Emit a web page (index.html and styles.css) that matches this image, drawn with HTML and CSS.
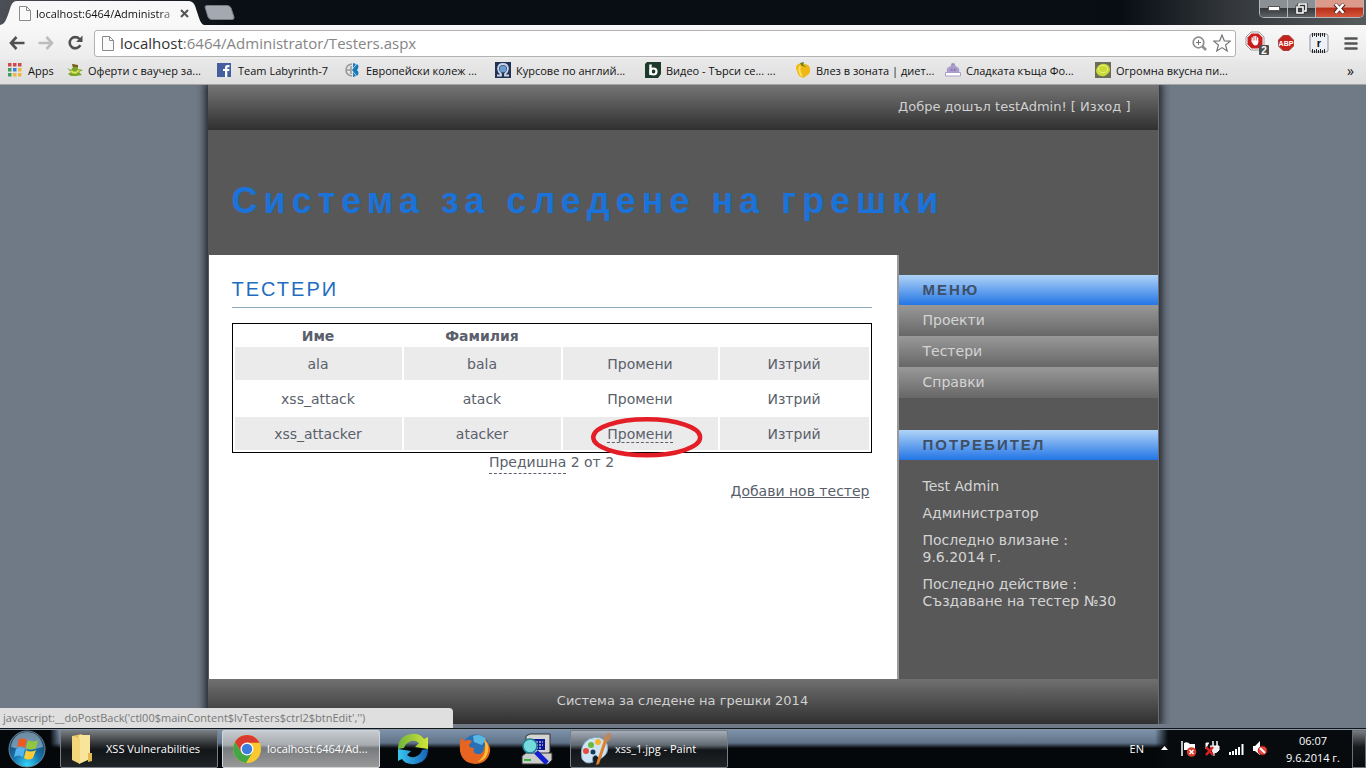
FILE: index.html
```html
<!DOCTYPE html>
<html lang="bg">
<head>
<meta charset="utf-8">
<title>Система за следене на грешки</title>
<link rel="stylesheet" href="styles.css">
</head>
<body>
<header class="browser">
  <div class="tabstrip">
    <div class="tab">
      <svg class="tab-shape" viewBox="0 0 206 25" preserveAspectRatio="none"><path d="M0 25C5 24 6 20 8 15L11 6Q13 1 17 1H190Q195 1 197 6L201 18Q203 24 206 25Z" fill="#f8f8f8"/></svg>
      <svg class="tab-page" width="12" height="15" viewBox="0 0 12 15"><path d="M.5.5H7.500L11.500 4.500V14.500H.5ZM7.500.5V4.500H11.500" fill="#fafafa" stroke="#8b8b8b"/></svg>
      <span class="tab-title">localhost:6464/Administra</span>
      <button class="tab-close" aria-label="Close tab"><svg width="9" height="9" viewBox="0 0 9 9"><path d="M1 1L8 8M8 1L1 8" stroke="#555" stroke-width="2"/></svg></button>
    </div>
    <button class="newtab" aria-label="New tab"><svg width="31" height="15" viewBox="0 0 31 15"><path d="M1 2Q1 .5 3 .5H23Q26 .5 27 3L30 12Q30.500 14.500 28 14.500H8Q5 14.500 4 12Z" fill="#a4a9b1" stroke="#777c84"/></svg></button>
    <div class="winbtns">
      <button aria-label="Minimize"><svg width="12" height="5" viewBox="0 0 12 5"><rect x=".5" y=".5" width="11" height="4" fill="#fff" stroke="#555"/></svg></button>
      <button aria-label="Restore"><svg width="13" height="12" viewBox="0 0 13 12"><path d="M4 3V1H11V8H9M2 4H8V10H2Z" fill="none" stroke="#333" stroke-width="3"/><path d="M4 3V1H11V8H9M2 4H8V10H2Z" fill="none" stroke="#fff" stroke-width="1.600"/></svg></button>
      <button class="winclose" aria-label="Close"><svg width="13" height="11" viewBox="0 0 13 11"><path d="M2 1L11 10M11 1L2 10" stroke="#4a2020" stroke-width="4"/><path d="M2.500 1L10.500 10M10.500 1L2.500 10" stroke="#fff" stroke-width="2.600"/></svg></button>
    </div>
  </div>
  <div class="toolbar">
    <button aria-label="Back"><svg width="16" height="14" viewBox="0 0 16 14"><path d="M7.500 1L2 7L7.500 13M2 7H15.500" fill="none" stroke="#505050" stroke-width="2.600"/></svg></button>
    <button aria-label="Forward"><svg width="16" height="14" viewBox="0 0 16 14"><path d="M8.500 1L14 7L8.500 13M14 7H.5" fill="none" stroke="#bdbdbd" stroke-width="2.600"/></svg></button>
    <button aria-label="Reload"><svg width="17" height="16" viewBox="0 0 17 16"><path d="M12.500 4A5.600 5.600 0 1 0 13.300 10.200" fill="none" stroke="#505050" stroke-width="2.600"/><path d="M15.500 .5V7H9Z" fill="#505050"/></svg></button>
    <div class="omnibox">
      <svg width="12" height="15" viewBox="0 0 12 15"><path d="M.5.5H7.500L11.500 4.500V14.500H.5ZM7.500.5V4.500H11.500" fill="#fafafa" stroke="#8b8b8b"/></svg>
      <div class="url" role="textbox" aria-label="Address" contenteditable="true"><b>localhost</b>:6464/Administrator/Testers.aspx</div>
      <svg width="15" height="15" viewBox="0 0 15 15"><circle cx="6.500" cy="6.500" r="5.300" fill="none" stroke="#8e8e8e" stroke-width="1.700"/><path d="M6.500 4V9M4 6.500H9" stroke="#777"/><path d="M10.500 10.500L14 14" stroke="#8e8e8e" stroke-width="2.500"/></svg>
      <svg width="18" height="18" viewBox="0 0 18 18"><path d="M9 1L11.300 6.800L17.300 7.100L12.600 11L14.200 17L9 13.600L3.800 17L5.400 11L.7 7.100L6.700 6.800Z" fill="#fdfdfd" stroke="#777" stroke-width="1.200"/></svg>
    </div>
    <div class="extensions">
      <button aria-label="AdBlock"><svg width="24" height="24" viewBox="0 0 24 24"><path d="M6 1H14L19 6V14L14 19H6L1 14V6Z" fill="#fff" stroke="#999"/><path d="M6.500 2.500H13.500L17.500 6.500V13.500L13.500 17.500H6.500L2.500 13.500V6.500Z" fill="#c91c1c"/><path d="M7.200 10V7M9 10V5.500M10.800 10V5.500M12.600 11V7" stroke="#fff" stroke-width="1.300" stroke-linecap="round"/><path d="M6.600 9.500H13.200V12Q12.500 14.500 10.500 14.500Q8.500 14.500 6.600 11Z" fill="#fff"/><rect x="14" y="14" width="10" height="10" rx="1" fill="#4f4f4f"/><text x="19" y="23" class="badge">2</text></svg></button>
      <button class="plus" aria-label="Adblock Plus"><svg width="16" height="16" viewBox="0 0 16 16"><path d="M5 .5H11L15.500 5V11L11 15.500H5L.5 11V5Z" fill="#c4221b" stroke="#a5423c"/><text x="8" y="11" class="abp">ABP</text></svg></button>
      <button aria-label="Ruler"><svg width="20" height="20" viewBox="0 0 20 20"><rect x="1" y="1" width="18" height="18" rx="2" fill="#edf1f5" stroke="#8d949c"/><path d="M3.500 0V4M5.500 0V3M7.500 0V4M9.500 0V3M11.500 0V4M13.500 0V3M15.500 0V4M3.500 16V20M5.500 17V20M7.500 16V20M9.500 17V20M11.500 16V20M13.500 17V20M15.500 16V20" stroke="#252525"/><text x="10" y="14" class="ruler">r</text></svg></button>
      <button aria-label="Menu"><svg width="14" height="13" viewBox="0 0 14 13"><path d="M1.500 1.500H12.500M1.500 6.500H12.500M1.500 11.500H12.500" stroke="#555" stroke-width="2.600" stroke-linecap="round"/></svg></button>
    </div>
  </div>
  <nav class="bookmarks">
    <a class="bm apps" href="#"><svg width="14" height="14" viewBox="0 0 14 14"><path d="M0 0h3.500v3.500H0zM5 0h3.500v3.500H5zM10 0h3.500v3.500H10z" fill="#d2484b"/><path d="M0 5h3.500v3.500H0z" fill="#3c9d5c"/><path d="M5 5h3.500v3.500H5z" fill="#3f7ed8"/><path d="M10 5h3.500v3.500H10zM5 10h3.500v3.500H5zM10 10h3.500v3.500H10z" fill="#edb83f"/><path d="M0 10h3.500v3.500H0z" fill="#3c9d5c"/></svg>Apps</a>
    <a class="bm" href="#"><svg width="16" height="14" viewBox="0 0 16 14"><path d="M0 5L4 7L6 4L5 2L7 1L9 3L11 3L11 6L16 7L12 9L15 12L9 13L4 13L1 11L4 9Z" fill="#79a629"/><path d="M5 1L11 2L11 4L6 4Z" fill="#7d5a1d"/><path d="M4 8Q8 12 12 7" fill="none" stroke="#e3e05a" stroke-width="2"/></svg>Оферти с ваучер за...</a>
    <a class="bm short" href="#"><svg width="14" height="14" viewBox="0 0 14 14"><rect width="14" height="14" fill="#455f9e"/><path d="M8 14V8H6V6H8V4.500Q8 2 10.500 2H12.500V4.200H11Q10.300 4.200 10.300 5V6H12.500L12.200 8H10.300V14Z" fill="#fff"/></svg>Team Labyrinth-7</a>
    <a class="bm" href="#"><svg width="16" height="16" viewBox="0 0 16 16"><path d="M7 2Q1 3 1 8Q1 13 7 14M1 8H6M6 4V12" fill="none" stroke="#999" stroke-width="1.500"/><path d="M8 1V6L11 2ZM8 15V10L11 14ZM7 8L12 2Q15 4 12 8Q15 11 12 14Z" fill="#1779b8"/></svg>Европейски колеж ...</a>
    <a class="bm" href="#"><svg width="16" height="16" viewBox="0 0 16 16"><rect width="16" height="16" fill="#223256"/><path d="M2 13.500H6V12Q3 9.500 3 6.500Q3.500 2 8 2Q12.500 2 13 6.500Q13 9.500 10 12V13.500H14" fill="none" stroke="#c9d6e8" stroke-width="1.800"/><circle cx="8" cy="7" r="3.500" fill="#6b9bd1"/></svg>Курсове по англий...</a>
    <a class="bm" href="#"><svg width="16" height="16" viewBox="0 0 16 16"><path d="M2 0H16V12L13 16H0V2Z" fill="#1d3a2b"/><path d="M5.500 2.500V13" stroke="#fff" stroke-width="2.500"/><circle cx="8.500" cy="9.500" r="3" fill="none" stroke="#fff" stroke-width="2.200"/></svg>Видео - Търси се... ...</a>
    <a class="bm" href="#"><svg width="16" height="16" viewBox="0 0 16 16"><path d="M2 3Q0 6 2 9Q3 14 6 15Q9 17 11 14Q16 12 15 7Q15 3 10 2Q5 0 2 3Z" fill="#efb816"/><path d="M5 4Q3 9 7 14" fill="none" stroke="#ffe05a" stroke-width="2"/><path d="M5 1L9 0L8 3L12 5L7 4Z" fill="#657b20"/></svg>Влез в зоната | диет...</a>
    <a class="bm" href="#"><svg width="16" height="14" viewBox="0 0 16 14"><circle cx="8" cy="2" r="2" fill="#9a8ebd"/><path d="M2 9Q1 5 4 4Q8 0 12 4Q15 5 14 9Z" fill="#a99bcb"/><path d="M.5 9.500H15.500V13H.5Z" fill="#fff" stroke="#aaa0c4"/><path d="M6 6H7.500V7.500H6ZM9 6H10.500V7.500H9Z" fill="#766795"/></svg>Сладката къща Фо...</a>
    <a class="bm" href="#"><svg width="16" height="16" viewBox="0 0 16 16"><rect width="16" height="16" fill="#6b6d59"/><ellipse cx="8" cy="8" rx="7" ry="6" fill="#c9d936" transform="rotate(-20 8 8)"/><ellipse cx="8" cy="7" rx="4.500" ry="3.500" fill="none" stroke="#eaf27c"/></svg>Огромна вкусна пи...</a>
    <button class="more" aria-label="More bookmarks">»</button>
  </nav>
</header>

<main class="viewport">
  <div class="site">
    <div class="userbar">Добре дошъл testAdmin! [ <a href="#">Изход</a> ]</div>
    <h1 class="banner">Система за следене на грешки</h1>
    <div class="columns">
      <section class="content">
        <h2>ТЕСТЕРИ</h2>
        <table class="testers">
          <colgroup><col class="c1"><col class="c2"><col class="c3"><col></colgroup>
          <thead><tr><th>Име</th><th>Фамилия</th><th></th><th></th></tr></thead>
          <tbody>
            <tr><td>ala</td><td>bala</td><td><a href="#">Промени</a></td><td><a href="#">Изтрий</a></td></tr>
            <tr><td>xss_attack</td><td>atack</td><td><a href="#">Промени</a></td><td><a href="#">Изтрий</a></td></tr>
            <tr><td>xss_attacker</td><td>atacker</td><td><span class="marked"><a class="hovered" href="#">Промени</a><svg class="ring" width="112" height="42" viewBox="0 0 112 42"><ellipse cx="56" cy="21" rx="53.500" ry="18" fill="none" stroke="#e31e26" stroke-width="4.500"/></svg></span></td><td><a href="#">Изтрий</a></td></tr>
          </tbody>
        </table>
        <div class="pager"><a href="#">Предишна</a> 2 от 2</div>
        <div class="add"><a href="#">Добави нов тестер</a></div>
      </section>
      <aside class="sidebar">
        <h3>МЕНЮ</h3>
        <nav class="menu"><a href="#">Проекти</a><a href="#">Тестери</a><a href="#">Справки</a></nav>
        <h3>ПОТРЕБИТЕЛ</h3>
        <div class="profile">
          <p>Test Admin</p>
          <p>Администратор</p>
          <p>Последно влизане :<br>9.6.2014 г.</p>
          <p>Последно действие :<br>Създаване на тестер №30</p>
        </div>
      </aside>
    </div>
    <footer class="sitefoot">Система за следене на грешки 2014</footer>
  </div>
  <div class="status">javascript:__doPostBack('ctl00$mainContent$lvTesters$ctrl2$btnEdit','')</div>
</main>

<footer class="taskbar">
  <button class="start" aria-label="Start"><svg width="38" height="38" viewBox="0 0 38 38">
    <defs><radialGradient id="orb" cx=".5" cy=".95" r=".9"><stop offset="0" stop-color="#35d5fa"/><stop offset=".45" stop-color="#1673ad"/><stop offset="1" stop-color="#173d5e"/></radialGradient></defs>
    <circle cx="19" cy="19" r="18" fill="url(#orb)" stroke="#6c8594"/><path d="M3 17Q5 3 19 2Q33 3 35 17Q19 22 3 17Z" fill="#b8cad5" opacity=".55"/>
    <path d="M11 9Q15 7 19 10L17 18Q13 15 9 17Z" fill="#ed5b25"/><path d="M20 10Q25 13 30 10L28 18Q23 21 18 18Z" fill="#91c63e"/><path d="M8 19Q13 16 17 19L15 27Q11 24 6 27Z" fill="#53b4ef"/><path d="M18 20Q22 23 28 20L25 28Q20 31 16 28Z" fill="#fccb35"/></svg></button>
  <button class="task"><svg width="24" height="32" viewBox="0 0 24 32"><path d="M2 3L12 1L12 28L2 26Z" fill="#eac75c"/><path d="M9 2L20 2V26L9 31Z" fill="#f8e49b"/><path d="M2 3L10 6V31L2 27Z" fill="#f4d67a"/><path d="M18 20H22V28L18 29Z" fill="#e0bb50"/></svg><span>XSS Vulnerabilities</span></button>
  <button class="task active"><svg width="30" height="30" viewBox="0 0 30 30"><circle cx="15" cy="15" r="14" fill="#fbc92f"/><path d="M2.900 8A14 14 0 0 1 27.500 8.700H15L9 18Z" fill="#d93b30"/><path d="M2.900 8A14 14 0 0 0 14 29L20.500 18.500L9.500 18.500Z" fill="#45a647"/><circle cx="15" cy="15" r="6.500" fill="#fff"/><circle cx="15" cy="15" r="5.200" fill="#3c7ddc"/></svg><span>localhost:6464/Ad...</span></button>
  <button class="pin" aria-label="Sync"><svg width="32" height="32" viewBox="0 0 32 32"><defs><linearGradient id="sy1" x1="0" y1="0" x2="1" y2="0"><stop offset="0" stop-color="#6fb43c"/><stop offset="1" stop-color="#d3e53a"/></linearGradient><linearGradient id="sy2" x1="0" y1="0" x2="1" y2="0"><stop offset="0" stop-color="#3bc4ee"/><stop offset="1" stop-color="#1565b8"/></linearGradient></defs><path d="M1 16Q1 3 14 1Q23 0 27 6L31 4V16L18 14L22 10Q17 6 12 9Q8 11 7 15Z" fill="url(#sy1)"/><path d="M31 16Q31 29 18 31Q9 32 5 26L1 28V16L14 18L10 22Q15 26 20 23Q24 21 25 17Z" fill="url(#sy2)"/></svg></button>
  <button class="pin" aria-label="Firefox"><svg width="32" height="32" viewBox="0 0 32 32"><circle cx="17" cy="15" r="13.500" fill="#2a70b5"/><path d="M14 3Q21 0 27 6L23 12L15 9Z" fill="#58b7e3"/><path d="M2 5L6 8Q9 6 13 8L10 12Q10 15 15 15Q13 20 18 21Q24 22 25 15Q27 12 25 6Q32 12 31 19Q28 31 16 31Q3 30 1 18Q0 11 2 5Z" fill="#e86421"/><path d="M25 6Q32 13 28 22Q25 28 18 29Q25 25 26 18Q27 12 25 6Z" fill="#f9bf35"/></svg></button>
  <button class="pin" aria-label="Computer search"><svg width="32" height="32" viewBox="0 0 32 32"><path d="M5 3L9 1H29V19L25 22H5Z" fill="#d4d4d4" stroke="#333"/><path d="M11 6H24V17H11Z" fill="#0c1993"/><path d="M15 9H22M15 12H22M15 15H20" stroke="#fff" stroke-dasharray="2 1"/><path d="M1 23L5 20H31V27L27 31H1Z" fill="#ccc" stroke="#333"/><path d="M3 27H10" stroke="#36b33b" stroke-width="2"/><path d="M15 19L26 30" stroke="#111fd1" stroke-width="5"/><circle cx="9" cy="13" r="7" fill="#76dadd" stroke="#207e91" stroke-width="1.500"/></svg></button>
  <button class="task paint"><svg width="34" height="34" viewBox="0 0 34 34"><path d="M3 27Q0 13 10 7Q23 2 28 12Q31 22 21 27L17 23Q12 24 14 30Q7 33 3 27Z" fill="#cfe4f2" stroke="#81a9c5"/><circle cx="7" cy="19" r="3" fill="#e34b3b"/><circle cx="12" cy="13" r="3" fill="#69b83f"/><circle cx="19" cy="10" r="3" fill="#f3b42e"/><circle cx="14" cy="20" r="2.500" fill="#17395b"/><path d="M28 9L20 32L17 33L18 29L25 8Z" fill="#df812f"/><path d="M24 8Q25 2 32 1Q33 7 28 10Z" fill="#be875a"/></svg><span>xss_1.jpg - Paint</span></button>
  <div class="tray">
    <span class="lang">EN</span>
    <svg width="7" height="5" viewBox="0 0 7 5"><path d="M0 4L3.500 0L7 4Z" fill="#fff"/></svg>
    <svg width="16" height="16" viewBox="0 0 16 16"><path d="M1 0V15" stroke="#fff" stroke-width="1.500"/><path d="M3 2Q6 0 9 3H14V9H3Z" fill="#fff"/><circle cx="10.500" cy="11" r="4.800" fill="#d83a2b"/><path d="M8.500 9L12.500 13M12.500 9L8.500 13" stroke="#fff" stroke-width="1.500"/></svg>
    <svg width="16" height="16" viewBox="0 0 16 16"><path d="M8 0V5M12 0V5" stroke="#fff" stroke-width="1.500"/><path d="M5 5H14V9Q12 12 9 12V15M4 2H1V8" fill="#eee" stroke="#fff"/><path d="M1 6L8 14M8 6L1 14" stroke="#e02020" stroke-width="2.500"/></svg>
    <svg width="15" height="12" viewBox="0 0 15 12"><path d="M1 9V12M4 8V12M7 6V12M10 4V12M13.500 1V12" stroke="#fff" stroke-width="2"/></svg>
    <svg width="16" height="15" viewBox="0 0 16 15"><path d="M1 5H3L8 0V14L3 10H1Z" fill="#fff"/><circle cx="10.500" cy="9.500" r="4.300" fill="#e34b42" stroke="#b91b17"/><path d="M8 7L13 12" stroke="#fff" stroke-width="1.800"/></svg>
  </div>
  <div class="clock"><div>06:07</div><div>9.6.2014 г.</div></div>
  <button class="peek" aria-label="Show desktop"></button>
</footer>
</body>
</html>
```
FILE: styles.css
```css
* { box-sizing: border-box; }
body {
  margin: 0;
  min-height: 100vh;
  display: flex;
  flex-direction: column;
  font-family: "Open Sans", "Noto Sans", sans-serif;
  font-size: 11px;
  color: #111;
}
button { border: 0; padding: 0; background: none; font: inherit; color: inherit; }
a { color: inherit; text-decoration: none; }
svg { display: block; flex: none; }

/* browser chrome */
.tabstrip {
  display: flex;
  height: 25px;
  background: linear-gradient(90deg, #4c5056 0, #0a0e15 230px, #080d14 82%, #33373b 90%, #555a5d 100%);
}
.tab {
  position: relative;
  width: 204px;
  display: flex;
  align-items: center;
  gap: 5px;
  padding: 2px 15px 0 19px;
}
.tab-shape { position: absolute; left: 0; top: 0; width: 100%; height: 25px; }
.tab-page, .tab-title, .tab-close { position: relative; }
.tab-title {
  flex: 1;
  white-space: nowrap;
  -webkit-mask-image: linear-gradient(90deg, #000 88%, rgba(0, 0, 0, 0.3));
  mask-image: linear-gradient(90deg, #000 88%, rgba(0, 0, 0, 0.3));
}
.newtab { padding-bottom: 1px; }
.winbtns {
  display: flex;
  margin-left: auto;
  margin-right: 2px;
  height: 18px;
  border: 1px solid #b3b7ba;
  border-top: 0;
  border-radius: 0 0 5px 5px;
  overflow: hidden;
}
.winbtns button {
  width: 28px;
  display: grid;
  place-items: center;
  background: linear-gradient(#8b9094 45%, #35393c 50%, #5e6265);
  border-right: 1px solid #b3b7ba;
}
.winbtns .winclose { width: 47px; border-right: 0; background: linear-gradient(#db9a8a 40%, #b8301b 50%, #d4573a); }
.toolbar {
  display: flex;
  align-items: center;
  gap: 13px;
  height: 34px;
  padding: 2px 8px 0 9px;
  background: linear-gradient(#f8f8f8, #ececec);
}
.omnibox {
  flex: 1;
  display: flex;
  align-items: center;
  gap: 6px;
  height: 27px;
  margin-left: -3px;
  padding: 0 4px 0 7px;
  background: #fff;
  border: 1px solid #b2b2b2;
  border-radius: 3px;
}
.url { flex: 1; font-size: 15px; line-height: 24px; color: #858585; white-space: nowrap; }
.url b { font-weight: normal; color: #333; }
.extensions { display: flex; align-items: center; gap: 15px; margin-left: -4px; }
.extensions .plus { margin-left: -6px; }
.badge { font: bold 10px "Liberation Sans", sans-serif; fill: #fff; text-anchor: middle; }
.abp { font: bold 7px "Liberation Sans", sans-serif; fill: #fff; text-anchor: middle; }
.ruler { font: bold 11px "Liberation Sans", sans-serif; fill: #111; text-anchor: middle; }
.bookmarks {
  display: flex;
  align-items: center;
  height: 26px;
  padding: 0 12px 3px 8px;
  background: linear-gradient(#e9e9e9, #dedede);
  border-bottom: 1px solid #a3a3a3;
}
.bm { display: flex; align-items: center; gap: 5px; width: 150px; white-space: nowrap; }
.bm.apps { width: 59px; gap: 6px; }
.bm.short { width: 128px; gap: 7px; }
.more { margin-left: auto; font-size: 14px; }

/* page */
.viewport {
  position: relative;
  flex: 1;
  display: flex;
  justify-content: center;
  padding-bottom: 4px;
  background: #707a86;
  font-family: "DejaVu Sans", sans-serif;
  font-size: 14px;
}
.site {
  flex: 1;
  max-width: 951px;
  display: flex;
  flex-direction: column;
  background: #585858;
  border-right: 1px solid #6e6e6e;
  box-shadow: 0 0 8px 3px #1d222b;
  clip-path: inset(0 -12px);
}
.userbar {
  height: 45px;
  padding-right: 27px;
  line-height: 43px;
  text-align: right;
  font-size: 13px;
  color: #d0d0d0;
  background: linear-gradient(#757575, #303030);
}
.banner {
  height: 125px;
  margin: 0;
  padding: 0 24px;
  line-height: 142px;
  font-family: "Liberation Sans", Arial, sans-serif;
  font-size: 36px;
  letter-spacing: 6px;
  white-space: nowrap;
  color: #1b72d8;
}
.columns { flex: 1; display: flex; }
.content { flex: 1; margin-left: 1px; padding: 20px 25px 20px 23px; background: #fff; color: #5a5f6b; }
.content h2 {
  margin: 0 0 15px;
  padding-bottom: 3px;
  border-bottom: 1px solid #8aa7bb;
  font: 20px/29px "Liberation Sans", Arial, sans-serif;
  letter-spacing: 2px;
  color: #1f6dc1;
}
.testers { width: 100%; table-layout: fixed; border: 1px solid #000; border-spacing: 2px; text-align: center; }
.c1 { width: 167px; }
.c2 { width: 157px; }
.c3 { width: 155px; }
.testers th { height: 19px; padding: 2px 0 0; line-height: 17px; }
.testers td { height: 33px; padding: 0; }
.testers tbody tr:nth-child(odd) td { background: #ebebeb; }
.marked { position: relative; }
.hovered { border-bottom: 1px dashed #5a5f6b; }
.ring { position: absolute; left: 50%; top: 50%; transform: translate(-44%, -42%); pointer-events: none; }
.pager { line-height: 19px; text-align: center; }
.pager a { display: inline-block; padding-bottom: 1px; border-bottom: 1px dashed #5a5f6b; }
.add { padding: 7px 2px 0 0; text-align: right; line-height: 20px; }
.add a { text-decoration: underline; }
.sidebar { width: 261px; padding-top: 20px; border-left: 2px solid #999; color: #d4d4d4; }
.sidebar h3 {
  margin: 0;
  padding-left: 24px;
  font: bold 15px/30px "Liberation Sans", Arial, sans-serif;
  letter-spacing: 2px;
  color: #3e5067;
  background: linear-gradient(#afd3f7, #2375e6);
}
.menu { margin-bottom: 32px; }
.menu a { display: block; padding-left: 24px; line-height: 31px; background: linear-gradient(#999, #676767); }
.profile { padding: 18px 24px; line-height: 17px; }
.profile p { margin: 0 0 10px; }
.sitefoot {
  height: 45px;
  line-height: 43px;
  text-align: center;
  font-size: 13px;
  color: #d0d0d0;
  background: linear-gradient(#707070, #303030);
}
.status {
  position: absolute;
  left: 0;
  bottom: 0;
  width: 453px;
  height: 20px;
  padding-left: 3px;
  border-radius: 0 4px 0 0;
  background: #dfdfdf;
  color: #777;
  font: 11px/19px "Open Sans", "Noto Sans", sans-serif;
  white-space: nowrap;
}

/* taskbar */
.taskbar {
  display: flex;
  align-items: center;
  height: 40px;
  border-top: 1px solid #10151b;
  background: linear-gradient(90deg, #05080b 0 50px, transparent 60px 1155px, #070b0e 1168px), linear-gradient(#8095ad 0, #607388 14px, #05080b 19px);
  box-shadow: inset 0 1px #8794a2;
  color: #fff;
}
.start { margin: 0 14px 0 8px; }
.task {
  display: flex;
  align-items: center;
  gap: 12px;
  width: 158px;
  height: 38px;
  margin-right: 4px;
  padding-left: 9px;
  border: 1px solid #777e85;
  border-radius: 2px;
  background: linear-gradient(#777b7f, #2b2d2f 14px, #121619 19px, #202427);
  white-space: nowrap;
}
.task.active { gap: 5px; margin-right: 17px; background: linear-gradient(#c6cbd1, #a7abaf 14px, #777a7d 17px, #999); border-color: #d3d6d8; }
.task.paint { gap: 2px; padding-left: 8px; background: linear-gradient(#a4adb8, #626a73 14px, #121619 19px, #202427); }
.pin + .pin { margin-left: 30px; }
.pin + .task { margin-left: 17px; }
.tray { display: flex; align-items: center; gap: 8px; margin-left: auto; }
.tray .lang { margin-right: 9px; }
.tray svg:nth-of-type(1) { margin-right: 5px; }
.clock { width: 84px; padding-left: 6px; text-align: center; line-height: 17px; }
.peek { width: 14px; height: 38px; border: 1px solid #6a7075; background: linear-gradient(#777c80, #16191c 16px, #090c0f); }
```
